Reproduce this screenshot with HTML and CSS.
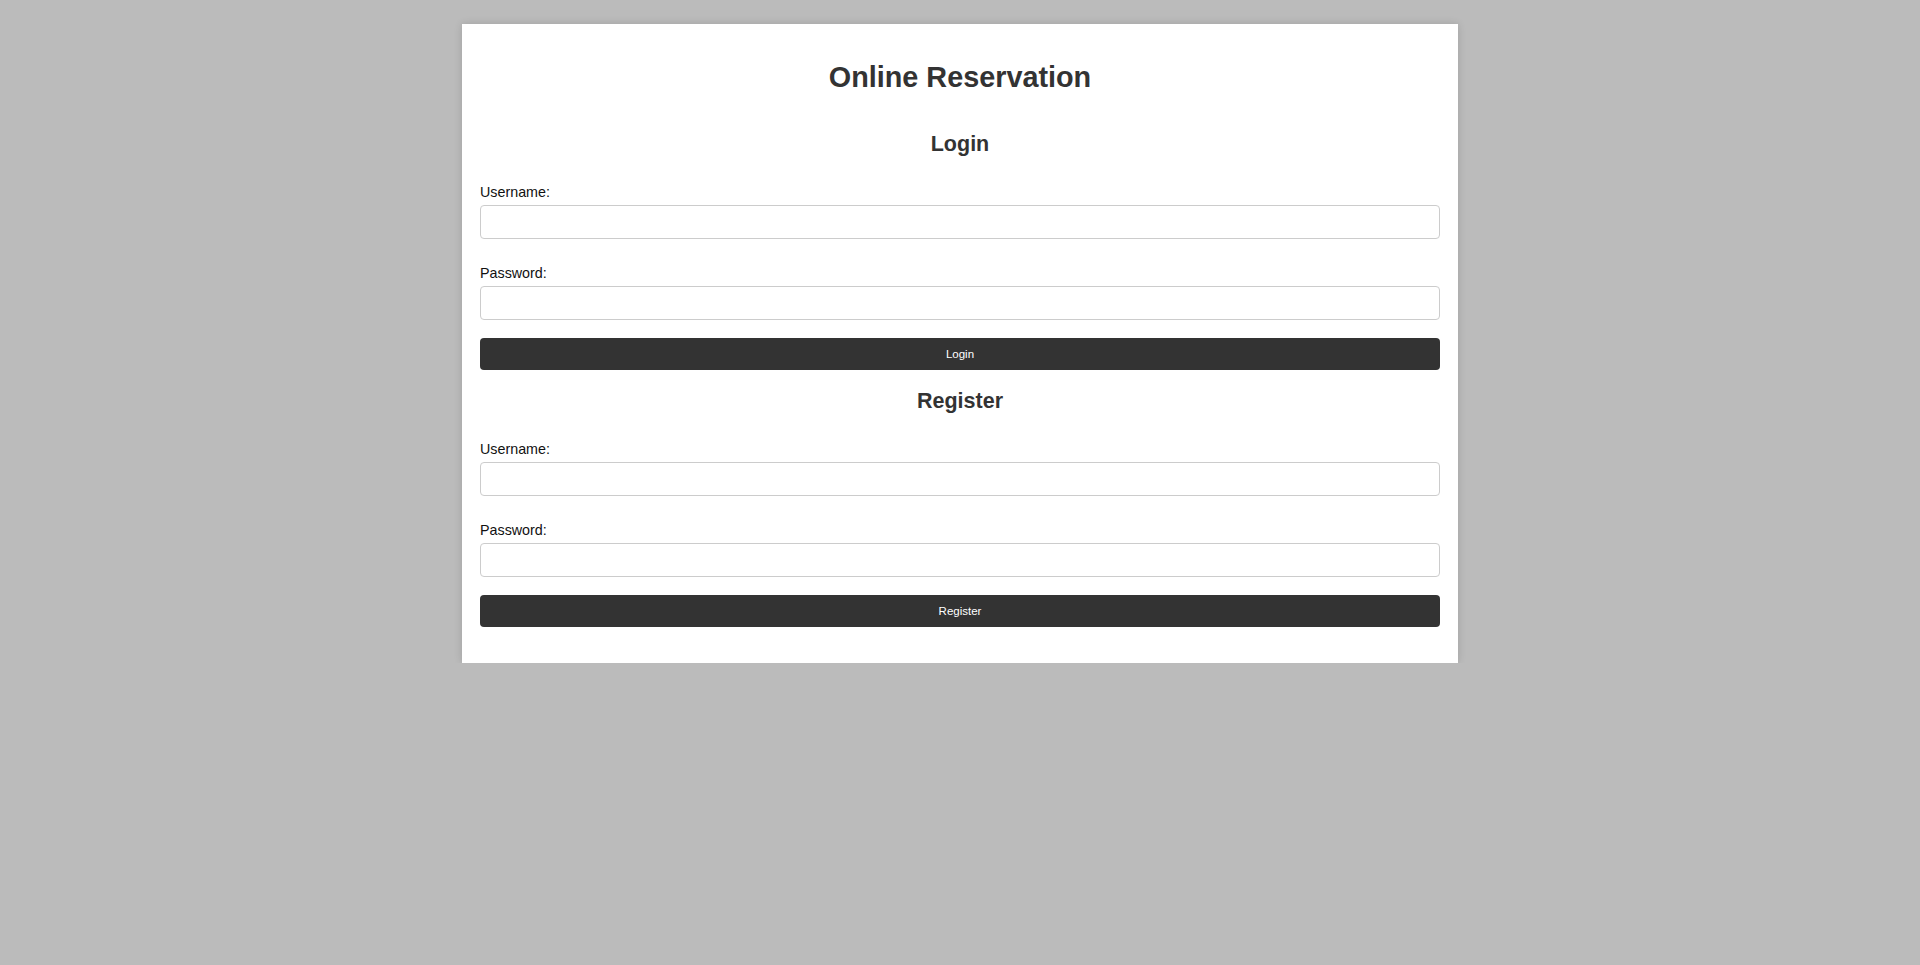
FILE: index.html
```html
<!DOCTYPE html>
<html lang="en">
<head>
<meta charset="utf-8">
<title>Online Reservation</title>
<link rel="stylesheet" href="styles.css">
</head>
<body>
<div class="container">
  <h1 class="title">Online Reservation</h1>
  <section class="section section-login">
    <h2 class="section-title">Login</h2>
    <form class="form">
      <label class="label" for="login-user">Username:</label>
      <input class="input" type="text" id="login-user">
      <label class="label" for="login-pass">Password:</label>
      <input class="input" type="password" id="login-pass">
      <button class="btn" type="button">Login</button>
    </form>
  </section>
  <section class="section section-register">
    <h2 class="section-title">Register</h2>
    <form class="form">
      <label class="label" for="reg-user">Username:</label>
      <input class="input" type="text" id="reg-user">
      <label class="label" for="reg-pass">Password:</label>
      <input class="input" type="password" id="reg-pass">
      <button class="btn" type="button">Register</button>
    </form>
  </section>
</div>
</body>
</html>
```

FILE: styles.css
```css
* {
  box-sizing: border-box;
}

body {
  margin: 0;
  background: #bbbbbb;
  font-family: "Liberation Sans", Arial, sans-serif;
  color: #333;
}

.container {
  width: 996px;
  margin: 24px auto 0;
  padding: 18px 18px 36px;
  background: #ffffff;
  box-shadow: 0 0 8px rgba(0, 0, 0, 0.14);
}

.title {
  margin: 19px 0 0;
  font-size: 28.8px;
  line-height: 32px;
  font-weight: bold;
  text-align: center;
  color: #333;
}

.section {
  display: flex;
  flex-direction: column;
}

.section-login {
  margin-top: 39px;
}

.section-register {
  margin-top: 19px;
}

.section-title {
  margin: 0;
  font-size: 21.5px;
  line-height: 24px;
  font-weight: bold;
  text-align: center;
  color: #333;
}

.form {
  display: flex;
  flex-direction: column;
}

.label {
  display: block;
  margin-top: 28px;
  margin-bottom: 5px;
  font-size: 14.3px;
  line-height: 16px;
  color: #111;
}

.input + .label {
  margin-top: 26px;
}

.input {
  display: block;
  width: 100%;
  height: 34px;
  margin: 0;
  padding: 8px;
  border: 1px solid #cccccc;
  border-radius: 4px;
  background: #fff;
  font-family: inherit;
  font-size: 14px;
}

.btn {
  display: block;
  width: 100%;
  height: 32px;
  margin: 18px 0 0;
  padding: 0;
  border: none;
  border-radius: 4px;
  background: #333333;
  color: #ffffff;
  font-family: "Liberation Sans", Arial, sans-serif;
  font-size: 11.5px;
  cursor: pointer;
}
```
